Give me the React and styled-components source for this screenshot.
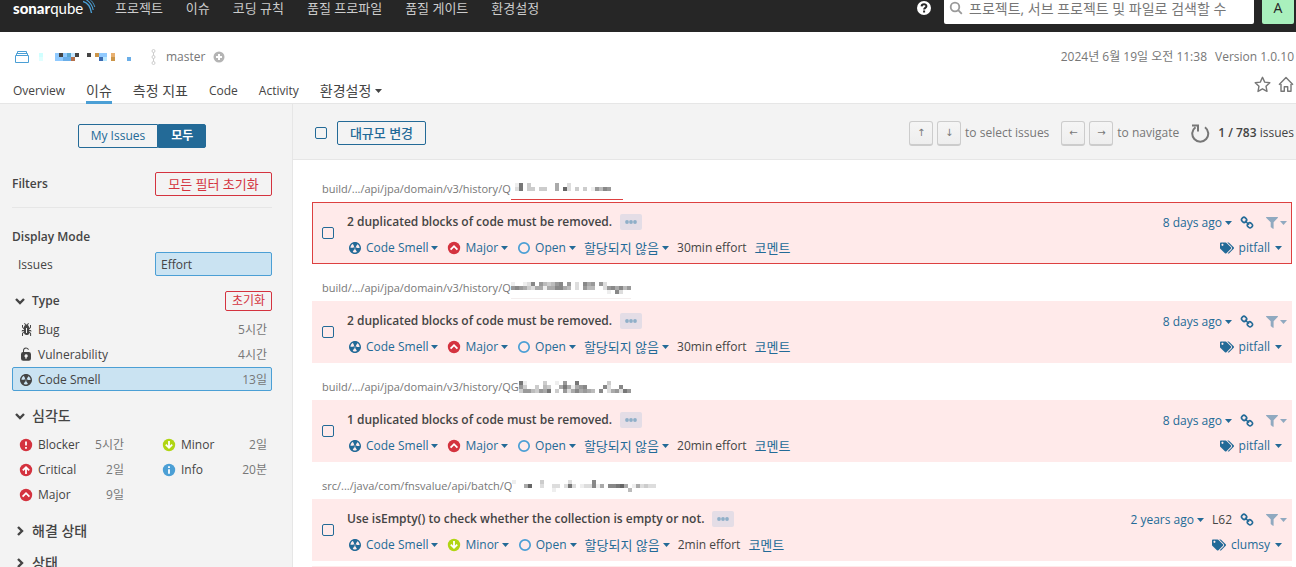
import React from "react";
import styled, { createGlobalStyle } from "styled-components";
import { FaTags } from "react-icons/fa";

const GlobalStyle = createGlobalStyle`
  * {
    box-sizing: border-box;
  }
  body {
    margin: 0;
    background: #fff;
    color: #444;
    font-family: "Open Sans", "Noto Sans CJK KR", sans-serif;
    font-size: 12px;
    line-height: 16px;
    overflow: hidden;
  }
  button, input {
    font-family: inherit;
  }
  button {
    margin: 0;
    padding: 0;
    border: 0;
    background: none;
    color: inherit;
    font-size: inherit;
    line-height: inherit;
    white-space: nowrap;
  }
  a {
    color: inherit;
    text-decoration: none;
  }
  svg {
    display: block;
    flex: none;
  }
`;

const TopBar = styled.header`
  display: flex;
  align-items: flex-start;
  height: 32px;
  padding: 0 2px 0 13px;
  background: #262626;
`;

const Logo = styled.a`
  display: flex;
  width: 84px;
  color: #fff;
  font-family: Lato, sans-serif;
  font-size: 15px;
  & b {
    font-weight: 900;
  }
`;

const TopNav = styled.nav`
  display: flex;
  flex: 1;
  gap: 23px;
  padding-left: 18px;
  color: #ccc;
  font-size: 13px;
`;

const Search = styled.label`
  display: flex;
  align-items: center;
  width: 310px;
  height: 24px;
  margin: 0 8px 0 13px;
  padding: 0 6px 8px 5px;
  border-radius: 0 0 2px 2px;
  background: #fff;
  & input {
    flex: 1;
    min-width: 0;
    height: 16px;
    padding: 0 0 0 6px;
    border: 0;
    outline: 0;
    font-size: 14px;
  }
  & input::placeholder {
    color: #777;
    opacity: 1;
  }
`;

const Avatar = styled.button`
  width: 32px;
  height: 24px;
  padding-bottom: 8px;
  border-radius: 0 0 2px 2px;
  background: #a9f0bd;
  color: #262626;
  font-size: 14px;
`;

const ProjectHeader = styled.div`
  height: 72px;
  padding: 16px 2px 0 13px;
  border-bottom: 1px solid #e6e6e6;
`;

const HeaderRow = styled.div`
  display: flex;
  align-items: center;
  height: 17px;
  gap: 8px;
  color: #777;
`;

const Spacer = styled.div`
  flex: 1;
`;

const TabRow = styled.div`
  display: flex;
  align-items: center;
  justify-content: space-between;
  height: 39px;
`;

const Tabs = styled.nav`
  display: flex;
  align-self: flex-end;
  gap: 21px;
`;

const Tab = styled.a`
  display: flex;
  align-items: center;
  gap: 4px;
  height: 22px;
  padding-bottom: 1px;
  border-bottom: 3px solid ${(p) => (p.$active ? "#4b9fd5" : "transparent")};
  font-size: ${(p) => (p.$korean ? "14px" : "12px")};
`;

const Favorites = styled.div`
  display: flex;
  gap: 7px;
  color: #777;
`;

const Page = styled.div`
  display: grid;
  grid-template-columns: 293px 1fr;
`;

const Sidebar = styled.aside`
  height: calc(100vh - 104px);
  padding: 20px 20px 0 12px;
  overflow: hidden;
  border-right: 1px solid #e6e6e6;
  background: #f3f3f3;
`;

const Toggle = styled.div`
  display: flex;
  justify-content: center;
  margin-bottom: 24px;
`;

const ToggleButton = styled.button`
  height: 24px;
  padding: 0 12px;
  border: 1px solid #236a97;
  border-radius: ${(p) => (p.$active ? "0 2px 2px 0" : "2px 0 0 2px")};
  background: ${(p) => (p.$active ? "#236a97" : "#f3f3f3")};
  color: ${(p) => (p.$active ? "#fff" : "#236a97")};
  font-weight: ${(p) => (p.$active ? 600 : 400)};
`;

const FilterHead = styled.div`
  display: flex;
  align-items: center;
  justify-content: space-between;
  padding-bottom: 11px;
  margin-bottom: 20px;
  border-bottom: 1px solid #e6e6e6;
`;

const Title = styled.h2`
  display: flex;
  align-items: center;
  gap: 6px;
  margin: 0;
  font-size: ${(p) => (p.$korean ? "14px" : "12px")};
  font-weight: ${(p) => (p.$korean ? 500 : 600)};
  line-height: 18px;
`;

const ResetButton = styled.button`
  width: ${(p) => (p.$small ? "47px" : "117px")};
  height: ${(p) => (p.$small ? "20px" : "24px")};
  border: 1px solid #d4333f;
  border-radius: 2px;
  color: #d4333f;
  font-size: ${(p) => (p.$small ? "12px" : "13px")};
`;

const Modes = styled.div`
  display: grid;
  grid-template-columns: 1fr 117px;
  margin: 6px 0 15px;
`;

const Facet = styled.button`
  display: flex;
  align-items: center;
  gap: 4px;
  width: 100%;
  height: 24px;
  padding: 1px 4px 0 5px;
  border: 1px solid ${(p) => (p.$active ? "#4b9fd5" : "transparent")};
  border-radius: 2px;
  background: ${(p) => (p.$active ? "#cae3f2" : "transparent")};
  text-align: left;
`;

const FacetValue = styled.span`
  margin-left: auto;
  color: #777;
`;

const FacetHead = styled.div`
  display: flex;
  align-items: center;
  justify-content: space-between;
  height: 20px;
  margin-bottom: ${(p) => (p.$closed ? "12px" : "6px")};
  padding-left: 2px;
`;

const FacetList = styled.div`
  display: grid;
  grid-template-columns: ${(p) => (p.$split ? "117px 117px" : "1fr")};
  grid-template-rows: repeat(3, 24px);
  grid-auto-flow: column;
  justify-content: space-between;
  gap: 1px 0;
  margin-bottom: 15px;
`;

const Main = styled.main`
  min-width: 0;
  height: calc(100vh - 104px);
  overflow: hidden;
`;

const Toolbar = styled.div`
  display: flex;
  align-items: center;
  height: 56px;
  padding: 3px 2px 0 22px;
  border-bottom: 1px solid #e6e6e6;
  background: #f3f3f3;
  color: #777;
`;

const Check = styled.input`
  appearance: none;
  flex: none;
  width: 12px;
  height: 12px;
  margin: 0;
  border: 1px solid #236a97;
  border-radius: 2px;
`;

const BulkButton = styled.button`
  width: 89px;
  height: 24px;
  margin-left: 10px;
  border: 1px solid #236a97;
  border-radius: 2px;
  color: #236a97;
  font-size: 13px;
  font-weight: 500;
`;

const Key = styled.kbd`
  width: 24px;
  height: 25px;
  margin-right: 4px;
  border: 1px solid #ccc;
  border-bottom-width: 2px;
  border-radius: 3px;
  background: linear-gradient(#f5f5f5, #eee);
  font-family: "DejaVu Sans", sans-serif;
  font-size: 10px;
  line-height: 22px;
  text-align: center;
`;

const KeyHint = styled.span`
  margin-right: 12px;
`;

const Counter = styled.span`
  margin-left: 8px;
  color: #444;
  & strong {
    font-weight: 600;
  }
`;

const List = styled.div`
  padding: 20px 4px 0 19px;
`;

const FilePath = styled.div`
  display: flex;
  height: 20px;
  margin-bottom: 2px;
  padding-left: 10px;
  color: #777;
  font-size: 11px;
  line-height: 18px;
`;

const Masked = styled.span`
  height: 20px;
  padding-top: 3px;
  border-bottom: 1px solid ${(p) => p.$line || "transparent"};
`;

const Issue = styled.article`
  display: flex;
  align-items: center;
  height: 62px;
  margin-bottom: ${(p) => (p.$stacked ? "5px" : "15px")};
  padding: 0 4px 0 9px;
  border: 1px solid ${(p) => (p.$selected ? "#dd4040" : "#ffeaea")};
  background: #ffeaea;
`;

const IssueBody = styled.div`
  flex: 1;
  padding: 3px 0 0 13px;
`;

const IssueLine = styled.div`
  display: flex;
  align-items: center;
  gap: 8px;
  height: 26px;
`;

const Message = styled.h3`
  margin: 0;
  font-size: 12px;
  font-weight: 600;
`;

const Dots = styled.button`
  width: 22px;
  height: 16px;
  padding-left: 5px;
  border-radius: 2px;
  background: #e4dde6;
  color: #8fafc8;
`;

const Action = styled.button`
  display: flex;
  align-items: center;
  gap: ${(p) => (p.$wide ? "5px" : "3px")};
  color: #236a97;
  font-size: ${(p) => (p.$korean ? "13px" : "12px")};
`;

const FilterAction = styled(Action)`
  gap: 2px;
  margin-left: 4px;
  opacity: 0.5;
`;

const IssueSide = styled.div`
  display: flex;
  flex-direction: column;
  align-items: flex-end;
  padding-top: 4px;
`;

const TagLine = styled(IssueLine)`
  height: 24px;
  padding-right: 5px;
`;

const SMELL =
  "M8 2C4.7 2 2 4.7 2 8s2.7 6 6 6 6-2.7 6-6-2.7-6-6-6zm-.5 5.5h.9v.9h-.9v-.9zm-3.8.2c-.1 0-.2-.1-.2-.2 0-.4.1-1.2.6-2S5.3 4.2 5.6 4c.2 0 .3 0 .3.1l1.3 2.3c0 .1 0 .2-.1.2-.1.2-.2.3-.3.5-.1.2-.2.4-.2.5 0 .1-.1.2-.2.2l-2.7-.1zM9.9 12c-.3.2-1.1.5-2 .5-.9 0-1.7-.3-2-.5-.1 0-.1-.2-.1-.3l1.3-2.3c0-.1.1-.1.2-.1.2.1.3.1.5.1s.4 0 .5-.1c.1 0 .2 0 .2.1l1.3 2.3c.2.2.2.3.1.3zm2.5-4.1L9.7 8c-.1 0-.2-.1-.2-.2 0-.2-.1-.4-.2-.5 0-.1-.2-.3-.3-.4-.1 0-.1-.1-.1-.2l1.3-2.3c.1-.1.2-.1.3-.1.3.2 1 .7 1.5 1.5s.6 1.6.6 2c0 0-.1.1-.2.1z";
const BUG =
  "M11 9h1.3l.5.8.8-.5-.8-1.3H11v-.3l2-2.3V3h-1v2l-1 1.2V5c-.1-.8-.7-1.5-1.4-1.9L11 1.8l-.7-.7-1.8 1.6-1.8-1.6-.7.7 1.5 1.3C6.7 3.5 6.1 4.2 6 5v1.1L5 5V3H4v2.3l2 2.3V8H4.2l-.7 1.2.8.5.4-.7H6v.3l-2 1.9V14h1v-2.4l1-1C6 12 7.1 13 8.4 13h.8c.7 0 1.4-.3 1.8-.9.3-.4.3-.9.2-1.4l.9.9V14h1v-2.8l-2-1.9V9zm-2 2H8V6h1v5z";
const LOCK =
  "M10.8 5H6V3.9a2.28 2.28 0 0 1 2-2.5 2.22 2.22 0 0 1 1.8 1.2.48.48 0 0 0 .7.2.48.48 0 0 0 .2-.7A3 3 0 0 0 8 .4a3.34 3.34 0 0 0-3 3.5v1.2a2.16 2.16 0 0 0-2 2.1v4.4a2.22 2.22 0 0 0 2.2 2.2h5.6a2.22 2.22 0 0 0 2.2-2.2V7.2A2.22 2.22 0 0 0 10.8 5zm-2.2 5.5v1.2H7.4v-1.2a1.66 1.66 0 1 1 2.4-1.5 1.66 1.66 0 0 1-1.2 1.5z";

const Glyph = ({ d }) => (
  <svg width="16" height="16" viewBox="0 0 16 16" fill="currentColor" fillRule="evenodd">
    <path d={d} />
  </svg>
);

const severities = {
  Blocker: { color: "#d4333f", mark: "M8 4.4v4.2M8 10v1.8" },
  Critical: { color: "#d4333f", mark: "M8 12V5.6M4.8 8.4 8 5.2l3.2 3.2" },
  Major: { color: "#d4333f", mark: "M4.6 9.6 8 6.2l3.4 3.4" },
  Minor: { color: "#b0d513", mark: "M8 4v6.4M4.8 7.6 8 10.8l3.2-3.2" },
  Info: { color: "#4b9fd5", mark: "M8 4.2V6M8 7.2v4.6" },
};

const SeverityIcon = ({ name }) => (
  <svg width="16" height="16" viewBox="0 0 16 16">
    <circle cx="8" cy="8" r="6.2" fill={severities[name].color} />
    <path d={severities[name].mark} fill="none" stroke="#fff" strokeWidth="1.8" />
  </svg>
);

const OpenIcon = () => (
  <svg width="16" height="16" viewBox="0 0 16 16">
    <circle cx="8" cy="8" r="5.2" fill="none" stroke="#4b9fd5" strokeWidth="1.7" />
  </svg>
);

const Caret = () => (
  <svg width="7" height="4" viewBox="0 0 7 4" fill="currentColor">
    <path d="M0 0h7L3.5 4z" />
  </svg>
);

const Chevron = ({ open }) => (
  <svg width="12" height="12" viewBox="0 0 12 12" fill="none" stroke="currentColor" strokeWidth="2.4">
    <path d={open ? "M2 4l4 4 4-4" : "M4 2l4 4-4 4"} />
  </svg>
);

const LinkIcon = () => (
  <svg width="14" height="14" viewBox="0 0 14 14" fill="none" stroke="currentColor" strokeWidth="1.6">
    <rect x="1.6" y="1.6" width="5" height="4.6" rx="2" transform="rotate(45 4.1 3.9)" />
    <rect x="7.4" y="7" width="5" height="4.6" rx="2" transform="rotate(45 9.9 9.3)" />
    <path d="M5 4.8l4 4" />
  </svg>
);

const FunnelIcon = () => (
  <svg width="12" height="12" viewBox="0 0 12 12" fill="currentColor">
    <path d="M.4 0h11.2c.4 0 .5.5.3.8L7.6 5.2v6.3c0 .4-.4.6-.7.3L4.7 9.9V5.2L.1.8C-.1.5 0 0 .4 0z" />
  </svg>
);

const projectCells = [
  [0, 0, "#d0ffff"], [0, 1, "#e0ffff"], [4, 0, "#90caff"], [4, 1, "#90caff"],
  [5, 0, "#444"], [5, 1, "#90caff"], [6, 0, "#90caff"], [6, 1, "#6aaee8"],
  [7, 0, "#5ba8d0"], [7, 1, "#6aaee8"], [8, 0, "#c8e8ff"], [8, 1, "#b5704a"],
  [9, 0, "#444"], [12, 0, "#444"], [14, 0, "#cc9548"], [15, 1, "#3c6ab0"],
  [15, 0, "#90caff"], [16, 0, "#90caff"], [16, 1, "#b8e8ff"], [18, 0, "#e8b070"],
  [18, 1, "#cc9548"], [22, 1, "#6aaee8"],
];

// each hex digit is the grey level of one 4px cell
const Mosaic = ({ rows }) => (
  <svg width={Math.max(...rows.map((r) => r.length)) * 4} height="12" shapeRendering="crispEdges">
    {rows.map((row, y) =>
      [...row].map((c, x) =>
        c === "." ? null : (
          <rect key={`${x}-${y}`} x={x * 4} y={y * 4} width="4" height="4" fill={`#${c}${c}${c}`} />
        )
      )
    )}
  </svg>
);

const issues = [
  {
    path: "build/.../api/jpa/domain/v3/history/Q",
    mask: ["fe7fc......af.d", "fd7fcc.cc..af6d.c.c.e9b89...", "..................f"],
    line: "#dd4040",
    message: "2 duplicated blocks of code must be removed.",
    severity: "Major",
    effort: "30min effort",
    age: "8 days ago",
    tag: "pitfall",
    selected: true,
  },
  {
    path: "build/.../api/jpa/domain/v3/history/Q",
    mask: ["e..ed8.9bcb98.9.d.8a9.9d...", "989acdaaeaa88ab.d.9bb..d98a8b9", "........................e.8d"],
    line: "#f3eeee",
    message: "2 duplicated blocks of code must be removed.",
    severity: "Major",
    effort: "30min effort",
    age: "8 days ago",
    tag: "pitfall",
  },
  {
    path: "build/.../api/jpa/domain/v3/history/QG",
    mask: ["7e....c..e.9..7.......c....", "9c..c.bc..a7aea98...f8d..8.", "c99bc9a7.cf9da8a9ab.8.da9d79"],
    message: "1 duplicated blocks of code must be removed.",
    severity: "Major",
    effort: "20min effort",
    age: "8 days ago",
    tag: "pitfall",
  },
  {
    path: "src/.../java/com/fnsvalue/api/batch/Q",
    mask: ["e.f....c......d.....8", "f.fa6..d..ddfd7d.edd8ea.8876afeadcdd", "..........e..................b"],
    message: "Use isEmpty() to check whether the collection is empty or not.",
    severity: "Minor",
    effort: "2min effort",
    age: "2 years ago",
    tag: "clumsy",
    row: "L62",
    stacked: true,
  },
];

const IssueRow = ({ issue }) => (
  <>
    <FilePath>
      {issue.path}
      <Masked $line={issue.line}><Mosaic rows={issue.mask} /></Masked>
    </FilePath>
    <Issue $selected={issue.selected} $stacked={issue.stacked}>
      <Check type="checkbox" aria-label={issue.message} />
      <IssueBody>
        <IssueLine>
          <Message>{issue.message}</Message>
          <Dots aria-label="more">
            <svg width="12" height="4" viewBox="0 0 12 4" fill="currentColor">
              <circle cx="2" cy="2" r="1.9" />
              <circle cx="6" cy="2" r="1.9" />
              <circle cx="10" cy="2" r="1.9" />
            </svg>
          </Dots>
        </IssueLine>
        <IssueLine>
          <Action><Glyph d={SMELL} />Code Smell<Caret /></Action>
          <Action><SeverityIcon name={issue.severity} />{issue.severity}<Caret /></Action>
          <Action><OpenIcon />Open<Caret /></Action>
          <Action $korean>할당되지 않음<Caret /></Action>
          <span>{issue.effort}</span>
          <Action $korean>코멘트</Action>
        </IssueLine>
      </IssueBody>
      <IssueSide>
        <IssueLine>
          <Action>{issue.age}<Caret /></Action>
          {issue.row && <span>{issue.row}</span>}
          <Action aria-label="link"><LinkIcon /></Action>
          <FilterAction aria-label="filter"><FunnelIcon /><Caret /></FilterAction>
        </IssueLine>
        <TagLine>
          <Action $wide><FaTags size={14} />{issue.tag}<Caret /></Action>
        </TagLine>
      </IssueSide>
    </Issue>
  </>
);

const severityFacets = [
  ["Blocker", "5시간"],
  ["Critical", "2일"],
  ["Major", "9일"],
  ["Minor", "2일"],
  ["Info", "20분"],
];

export default function App() {
  return (
    <>
      <GlobalStyle />
      <TopBar>
        <Logo href="#home">
          <b>sonar</b>qube
          <svg width="14" height="14" viewBox="0 0 14 14" fill="none" stroke="#4b9fd5">
            <path d="M0 1.5C4 2.5 7.5 7 8.5 13" strokeWidth="1.4" />
            <path d="M3-.5C7 2 9.5 6 10.2 10" strokeWidth="1.1" />
            <path d="M6.5-1C9 1 11 4 11.8 7" strokeWidth=".9" />
          </svg>
        </Logo>
        <TopNav>
          <a href="#projects">프로젝트</a>
          <a href="#issues">이슈</a>
          <a href="#rules">코딩 규칙</a>
          <a href="#profiles">품질 프로파일</a>
          <a href="#gates">품질 게이트</a>
          <a href="#settings">환경설정</a>
        </TopNav>
        <svg width="14" height="16" viewBox="0 0 14 16">
          <circle cx="7" cy="8" r="7" fill="#fff" />
          <path d="M4.6 6.4C4.7 3.6 9.5 3.6 9.4 6.3 9.4 7.9 7.1 7.9 7.1 9.6M7.1 10.6v1.9" fill="none" stroke="#262626" strokeWidth="2" />
        </svg>
        <Search>
          <svg width="14" height="14" viewBox="0 0 14 14" fill="none" stroke="#999" strokeWidth="1.8">
            <circle cx="6" cy="6" r="4.3" />
            <path d="M9.2 9.2l3.6 3.6" />
          </svg>
          <input aria-label="검색" placeholder="프로젝트, 서브 프로젝트 및 파일로 검색할 수" />
        </Search>
        <Avatar>A</Avatar>
      </TopBar>
      <ProjectHeader>
        <HeaderRow>
          <svg width="18" height="16" viewBox="0 0 18 16" fill="none" stroke="#4b9fd5">
            <path d="M2.5 6.5h13v7h-13zM3.500 6.500v-2h11v2M4.500 4.500v-2h9v2" />
          </svg>
          <svg width="96" height="8" shapeRendering="crispEdges">
            {projectCells.map(([x, y, fill]) => (
              <rect key={`${x}-${y}`} x={x * 4} y={y * 4} width="4" height="4" fill={fill} />
            ))}
          </svg>
          <svg width="15" height="16" viewBox="0 0 15 16" fill="none" stroke="#ccc">
            <circle cx="10.5" cy="2" r="1.5" />
            <circle cx="10.5" cy="8" r="1.5" />
            <circle cx="10.5" cy="14" r="1.5" />
            <path d="M10.5 3.5v3M10.5 9.5v3" />
          </svg>
          master
          <svg width="12" height="12" viewBox="0 0 12 12">
            <circle cx="6" cy="6" r="5.5" fill="#b4b4b4" />
            <path d="M6 3v6M3 6h6" stroke="#fff" strokeWidth="2" />
          </svg>
          <Spacer />
          <span>2024년 6월 19일 오전 11:38</span>
          <span>Version 1.0.10</span>
        </HeaderRow>
        <TabRow>
          <Tabs>
            <Tab href="#overview">Overview</Tab>
            <Tab $active $korean href="#issues">이슈</Tab>
            <Tab $korean href="#measures">측정 지표</Tab>
            <Tab href="#code">Code</Tab>
            <Tab href="#activity">Activity</Tab>
            <Tab $korean href="#admin">환경설정<Caret /></Tab>
          </Tabs>
          <Favorites>
            <svg width="17" height="17" viewBox="0 0 17 17" fill="none" stroke="currentColor" strokeWidth="1.4" strokeLinejoin="round">
              <path d="M8.5 1.3l2.2 4.8 5.1.6-3.8 3.5 1 5.2-4.500-2.600L4 15.4l1-5.200L1.200 6.700l5.100-.600z" />
            </svg>
            <svg width="16" height="17" viewBox="0 0 16 17" fill="none" stroke="currentColor" strokeWidth="1.4" strokeLinejoin="round">
              <path d="M1 8.8L8 1.5l7 7.3M3 8v7.3h3.3v-4.600h3.400v4.600H13V8" />
            </svg>
          </Favorites>
        </TabRow>
      </ProjectHeader>
      <Page>
        <Sidebar>
          <Toggle>
            <ToggleButton>My Issues</ToggleButton>
            <ToggleButton $active>모두</ToggleButton>
          </Toggle>
          <FilterHead>
            <Title>Filters</Title>
            <ResetButton>모든 필터 초기화</ResetButton>
          </FilterHead>
          <Title>Display Mode</Title>
          <Modes>
            <Facet>Issues</Facet>
            <Facet $active>Effort</Facet>
          </Modes>
          <FacetHead>
            <Title><Chevron open />Type</Title>
            <ResetButton $small>초기화</ResetButton>
          </FacetHead>
          <FacetList>
            <Facet><Glyph d={BUG} />Bug<FacetValue>5시간</FacetValue></Facet>
            <Facet><Glyph d={LOCK} />Vulnerability<FacetValue>4시간</FacetValue></Facet>
            <Facet $active><Glyph d={SMELL} />Code Smell<FacetValue>13일</FacetValue></Facet>
          </FacetList>
          <FacetHead>
            <Title $korean><Chevron open />심각도</Title>
          </FacetHead>
          <FacetList $split>
            {severityFacets.map(([name, value]) => (
              <Facet key={name}><SeverityIcon name={name} />{name}<FacetValue>{value}</FacetValue></Facet>
            ))}
          </FacetList>
          <FacetHead $closed>
            <Title $korean><Chevron />해결 상태</Title>
          </FacetHead>
          <FacetHead $closed>
            <Title $korean><Chevron />상태</Title>
          </FacetHead>
        </Sidebar>
        <Main>
          <Toolbar>
            <Check type="checkbox" aria-label="모두 선택" />
            <BulkButton>대규모 변경</BulkButton>
            <Spacer />
            <Key>↑</Key>
            <Key>↓</Key>
            <KeyHint>to select issues</KeyHint>
            <Key>←</Key>
            <Key>→</Key>
            <KeyHint>to navigate</KeyHint>
            <svg width="19" height="19" viewBox="0 0 19 19" fill="none" stroke="currentColor" strokeWidth="2">
              <path d="M14 3.2A8 8 0 1 1 4.5 3.2M1 1.5h6v6" />
            </svg>
            <Counter><strong>1 / 783</strong> issues</Counter>
          </Toolbar>
          <List>
            {issues.map((issue, i) => (
              <IssueRow key={i} issue={issue} />
            ))}
            <Issue />
          </List>
        </Main>
      </Page>
    </>
  );
}
